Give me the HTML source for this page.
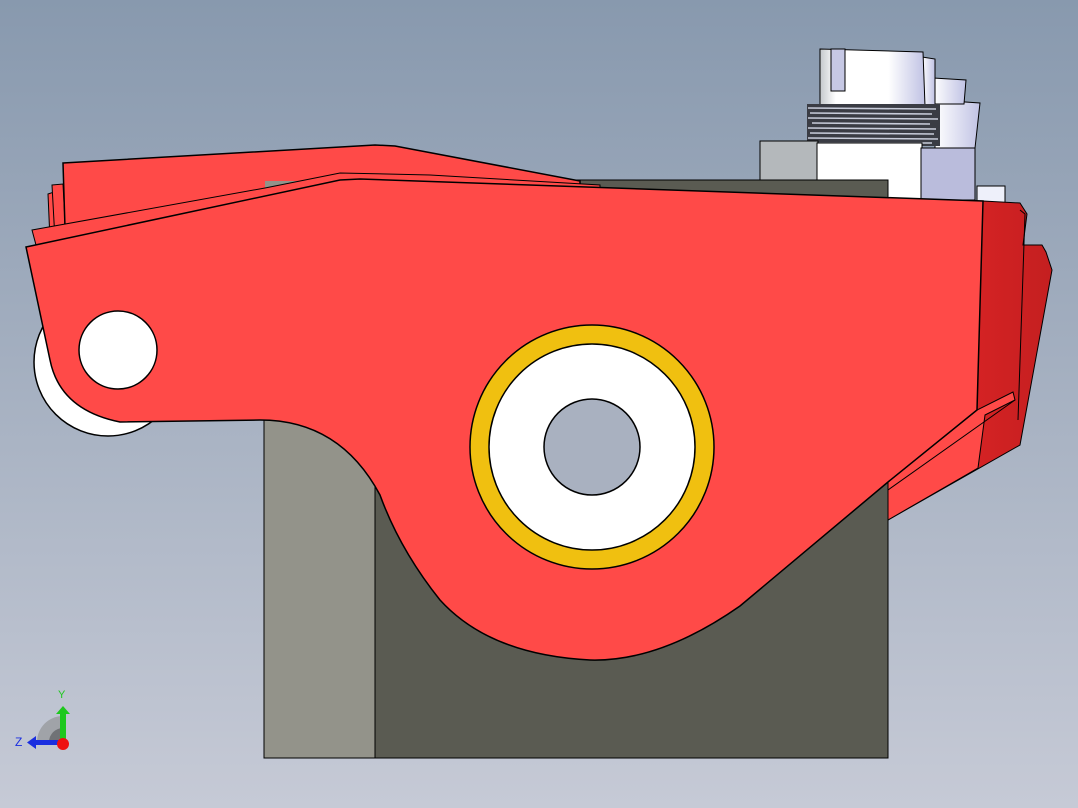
<!DOCTYPE html>
<html><head><meta charset="utf-8"><style>
html,body{margin:0;padding:0;width:1078px;height:808px;overflow:hidden}
svg{display:block}
</style></head><body>
<svg width="1078" height="808" viewBox="0 0 1078 808" xmlns="http://www.w3.org/2000/svg">
<defs>
<linearGradient id="bg" x1="0" y1="0" x2="0" y2="1">
<stop offset="0" stop-color="#8899ae"/><stop offset="1" stop-color="#c6cad6"/></linearGradient>
<linearGradient id="cyl" x1="0" y1="0" x2="1" y2="0">
<stop offset="0" stop-color="#c4c8cc"/><stop offset="0.15" stop-color="#ffffff"/><stop offset="0.65" stop-color="#ffffff"/><stop offset="1" stop-color="#c0c2e4"/></linearGradient>
<linearGradient id="cyl2" x1="0" y1="0" x2="1" y2="0">
<stop offset="0" stop-color="#ffffff"/><stop offset="1" stop-color="#c0c2e4"/></linearGradient>
<linearGradient id="side" x1="0" y1="0" x2="1" y2="0">
<stop offset="0" stop-color="#e82628"/><stop offset="1" stop-color="#c41f20"/></linearGradient>
</defs>
<rect width="1078" height="808" fill="url(#bg)"/>
<!-- fitting -->
<path d="M935 100 L980 103 L975 148 L935 148 Z" fill="url(#cyl2)" stroke="#000"/>
<path d="M933 78 L966 80 L964 104 L933 104 Z" fill="url(#cyl2)" stroke="#000"/>
<path d="M922 57 L935 59 L935 106 L922 106 Z" fill="url(#cyl2)" stroke="#000"/>
<path d="M820 49 L923 52 L925 106 L820 106 Z" fill="url(#cyl)" stroke="#000"/>
<rect x="831" y="49" width="14" height="42" fill="#c6c8e4" stroke="#000"/>
<rect x="807" y="104" width="133" height="42" fill="#3a3c44"/>
<g stroke="#c8ccda" stroke-width="1.6">
<line x1="808" y1="108" x2="936" y2="109"/><line x1="810" y1="113" x2="932" y2="114"/>
<line x1="808" y1="118" x2="938" y2="119"/><line x1="812" y1="123" x2="930" y2="124"/>
<line x1="808" y1="128" x2="936" y2="129"/><line x1="810" y1="133" x2="934" y2="134"/>
<line x1="808" y1="138" x2="938" y2="139"/><line x1="812" y1="143" x2="932" y2="143"/>
</g>
<rect x="760" y="141" width="58" height="56" fill="#b4b8bb" stroke="#000"/>
<rect x="817" y="143" width="105" height="56" fill="#fff" stroke="#000"/>
<rect x="921" y="148" width="54" height="52" fill="#babcdc" stroke="#000"/>
<rect x="977" y="186" width="28" height="17" fill="#eef0fa" stroke="#000"/>
<!-- block -->
<rect x="264" y="180" width="111" height="578" fill="#93938a" stroke="#000"/>
<rect x="375" y="180" width="513" height="578" fill="#5a5b52" stroke="#000"/>
<!-- roller -->
<circle cx="108" cy="362" r="74" fill="#fff" stroke="#000" stroke-width="1.5"/>
<!-- back plates -->
<path d="M48 194 L54 192 L58 240 L50 240 Z" fill="#ff4a48" stroke="#000"/>
<path d="M52 185 L63 184 L66 240 L55 240 Z" fill="#ff4a48" stroke="#000"/>
<path d="M63 163 L375 145 L395 146 L580 181 L580 260 L66 260 Z" fill="#ff4a48" stroke="#000" stroke-width="1.5"/>
<path d="M265 181 L345 181 L340 196 L265 196 Z" fill="#93938a"/>
<path d="M32 230 L265 188 L340 173 L430 175 L600 185 L600 260 L40 260 Z" fill="#ff4a48" stroke="#000"/>
<!-- right side mass -->
<path d="M983 201 L1020 203 L1027 214 L1023 245 L1042 245 L1046 252 L1052 270 L1020 445 L888 520 L888 482 Z" fill="url(#side)" stroke="#000"/>
<path d="M1020 210 L1025 214 L1018 420" fill="none" stroke="#000"/>
<path d="M888 482 L977 410 L1013 392 L1015 400 L985 415 L978 468 L888 520 Z" fill="#ff4a48" stroke="#000"/>
<path d="M888 490 L1015 400" stroke="#000" fill="none"/>
<!-- main arm -->
<path d="M26 247 L340 180 L360 179 L983 201 L977 410 L888 482 L740 606 Q660 662 590 660 Q490 655 440 600 Q400 550 380 495 Q340 420 260 420 L120 422 Q60 410 50 360 Z" fill="#ff4a48" stroke="#000" stroke-width="1.5"/>
<!-- pin -->
<circle cx="118" cy="350" r="39" fill="#fff" stroke="#000" stroke-width="1.5"/>
<!-- bushing -->
<circle cx="592" cy="447" r="122" fill="#f0c010" stroke="#000" stroke-width="1.5"/>
<circle cx="592" cy="447" r="103" fill="#fff" stroke="#000" stroke-width="1.5"/>
<circle cx="592" cy="447" r="48" fill="#a9b1c0" stroke="#000" stroke-width="1.5"/>
<!-- triad -->
<path d="M37 742 A26 26 0 0 1 63 716 L63 742 Z" fill="#a0a3a8"/>
<path d="M49 742 A14 14 0 0 1 63 728 L63 742 Z" fill="#707276"/>
<rect x="60" y="712" width="6" height="30" fill="#1ec81e"/>
<path d="M56 714 L63 706 L70 714 Z" fill="#1ec81e"/>
<text x="58" y="698" font-family="Liberation Sans, sans-serif" font-size="11" fill="#1ec81e">Y</text>
<rect x="34" y="740" width="28" height="5" fill="#1a2ee0"/>
<path d="M36 736 L27 742.5 L36 749 Z" fill="#1a2ee0"/>
<text x="15" y="746" font-family="Liberation Sans, sans-serif" font-size="12" fill="#1a2ee0">Z</text>
<circle cx="63" cy="744" r="6" fill="#ee1010"/>
</svg>
</body></html>
